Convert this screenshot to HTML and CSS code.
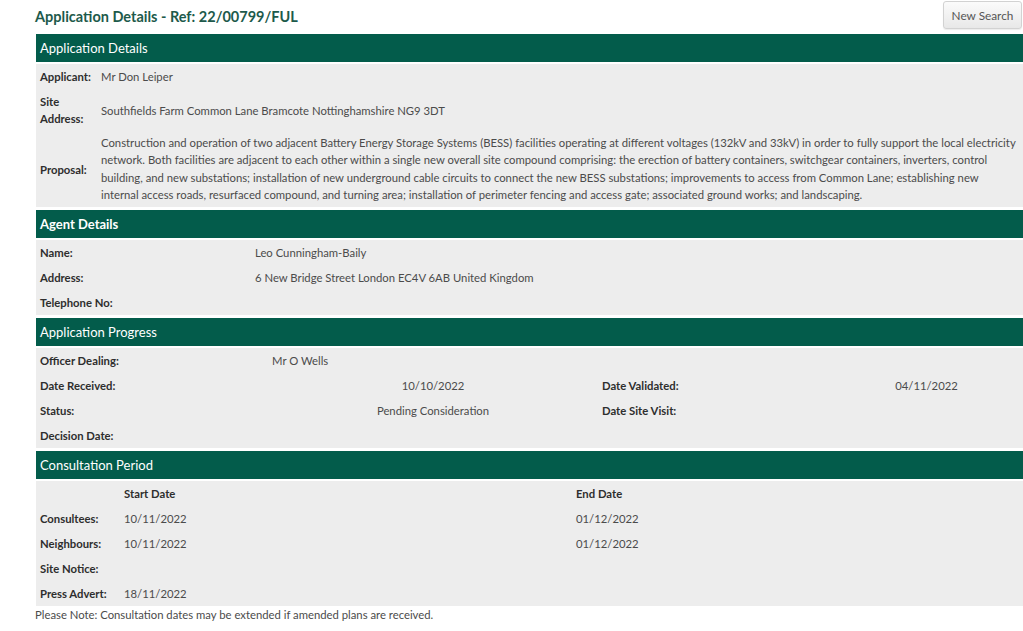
FILE: index.html
```html
<!DOCTYPE html>
<html lang="en">
<head>
<meta charset="utf-8">
<title>Application Details - Ref: 22/00799/FUL</title>
<link rel="stylesheet" href="styles.css">
</head>
<body>
<div class="page">
  <div class="topbar">
    <h1 class="title">Application Details - Ref: 22/00799/FUL</h1>
    <button class="btn">New Search</button>
  </div>

  <section class="section">
    <h2 class="bar">Application Details</h2>
    <div class="body grid-app">
      <div class="lbl">Applicant:</div><div class="val">Mr Don Leiper</div>
      <div class="lbl">Site Address:</div><div class="val">Southfields Farm Common Lane Bramcote Nottinghamshire NG9 3DT</div>
      <div class="lbl">Proposal:</div><div class="val proposal">Construction and operation of two adjacent Battery Energy Storage Systems (BESS) facilities operating at different voltages (132kV and 33kV) in order to fully support the local electricity network. Both facilities are adjacent to each other within a single new overall site compound comprising: the erection of battery containers, switchgear containers, inverters, control building, and new substations; installation of new underground cable circuits to connect the new BESS substations; improvements to access from Common Lane; establishing new internal access roads, resurfaced compound, and turning area; installation of perimeter fencing and access gate; associated ground works; and landscaping.</div>
    </div>
  </section>

  <section class="section">
    <h2 class="bar bold">Agent Details</h2>
    <div class="body grid-agent">
      <div class="lbl">Name:</div><div class="val">Leo Cunningham-Baily</div>
      <div class="lbl">Address:</div><div class="val">6 New Bridge Street London EC4V 6AB United Kingdom</div>
      <div class="lbl">Telephone No:</div><div class="val"></div>
    </div>
  </section>

  <section class="section">
    <h2 class="bar">Application Progress</h2>
    <div class="body grid-prog">
      <div class="lbl">Officer Dealing:</div><div class="val left">Mr O Wells</div><div class="lbl"></div><div class="val"></div>
      <div class="lbl">Date Received:</div><div class="val center">10/10/2022</div><div class="lbl l3">Date Validated:</div><div class="val center">04/11/2022</div>
      <div class="lbl">Status:</div><div class="val center">Pending Consideration</div><div class="lbl l3">Date Site Visit:</div><div class="val"></div>
      <div class="lbl">Decision Date:</div><div class="val"></div><div class="lbl"></div><div class="val"></div>
    </div>
  </section>

  <section class="section last">
    <h2 class="bar">Consultation Period</h2>
    <div class="body grid-cons">
      <div class="lbl"></div><div class="lbl c2">Start Date</div><div class="lbl c3">End Date</div>
      <div class="lbl">Consultees:</div><div class="val c2">10/11/2022</div><div class="val c3">01/12/2022</div>
      <div class="lbl">Neighbours:</div><div class="val c2">10/11/2022</div><div class="val c3">01/12/2022</div>
      <div class="lbl">Site Notice:</div><div class="val c2"></div><div class="val c3"></div>
      <div class="lbl">Press Advert:</div><div class="val c2">18/11/2022</div><div class="val c3"></div>
    </div>
  </section>

  <p class="note">Please Note: Consultation dates may be extended if amended plans are received.</p>
</div>
</body>
</html>
```

FILE: styles.css
```css
* { box-sizing: border-box; }
html, body { margin: 0; padding: 0; background: #fff; }
body {
  font-family: Lato, "Open Sans", "Liberation Sans", sans-serif;
  font-size: 11.3px;
  color: #444;
}
.page { padding-left: 35px; }

.topbar {
  height: 34px;
  display: flex;
  justify-content: space-between;
  align-items: flex-start;
}
.title {
  margin: 0;
  padding-top: 8px;
  font-size: 14.5px;
  font-weight: 700;
  color: #1d5a4b;
  line-height: 18px;
}
.btn {
  margin-top: 1px;
  margin-right: 1px;
  width: 79px;
  height: 28px;
  border: 1px solid #d2d2d2;
  border-radius: 3px;
  background: linear-gradient(#fbfbfb, #e8e8e8);
  font-family: inherit;
  font-size: 11.8px;
  color: #555;
  padding: 0;
  box-shadow: 0 1px 1px rgba(0,0,0,0.08);
}

.section { margin-left: 1px; margin-bottom: 3px; }
.section.last { margin-bottom: 0; }
.bar {
  margin: 0 0 2px 0;
  height: 28px;
  background: #035c4b;
  color: #fff;
  font-size: 13px;
  font-weight: 400;
  line-height: 28px;
  padding-left: 4px;
}
.bar.bold { font-weight: 700; }

.body {
  background: #ededed;
  display: grid;
  line-height: 17px;
}
.lbl, .val { padding: 4px 4px; }
.lbl { font-weight: 700; color: #2e2e2e; }
.val { color: #4b4b4b; }

.grid-app { grid-template-columns: 60px 1fr; align-items: center; }
.grid-app .val { padding-left: 5px; padding-right: 2px; }
.grid-app .proposal { padding-top: 3px; padding-bottom: 4px; padding-right: 6px; line-height: 17.3px; }

.grid-agent { grid-template-columns: 214px 1fr; }
.grid-agent .val { padding-left: 5px; }

.grid-prog { grid-template-columns: 233px 328px 233px 1fr; }
.grid-prog .left { padding-left: 3px; }
.grid-prog .center { text-align: center; }
.grid-prog .l3 { padding-left: 5px; }

.grid-cons { grid-template-columns: 84px 452px 1fr; }
.grid-cons .c2 { padding-left: 4px; }
.grid-cons .c3 { padding-left: 4px; }

.note {
  margin: 0;
  line-height: 17px;
  color: #4b4b4b;
}
```
